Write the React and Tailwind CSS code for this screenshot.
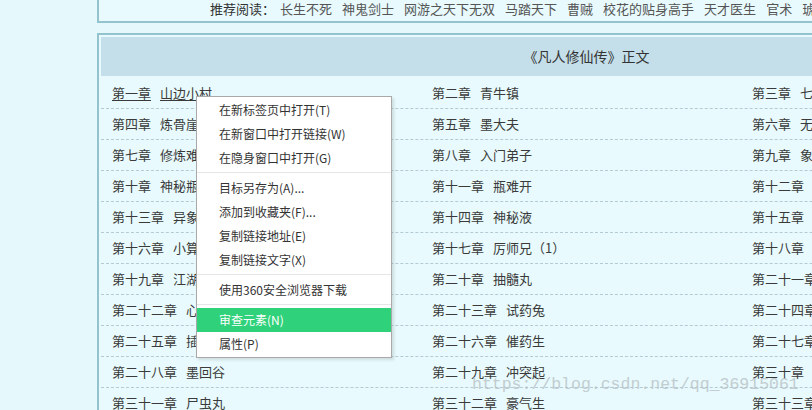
const recommend = [
  "长生不死",
  "神鬼剑士",
  "网游之天下无双",
  "马踏天下",
  "曹贼",
  "校花的贴身高手",
  "天才医生",
  "官术",
  "琥珀之剑",
];

const chapters = [
  "第一章 山边小村",
  "第二章 青牛镇",
  "第三章 七玄门",
  "第四章 炼骨崖",
  "第五章 墨大夫",
  "第六章 无名口诀",
  "第七章 修炼难",
  "第八章 入门弟子",
  "第九章 象甲功",
  "第十章 神秘瓶",
  "第十一章 瓶难开",
  "第十二章 绿液",
  "第十三章 异象",
  "第十四章 神秘液",
  "第十五章 张铁",
  "第十六章 小算盘",
  "第十七章 厉师兄（1）",
  "第十八章 厉师兄（2）",
  "第十九章 江湖人",
  "第二十章 抽髓丸",
  "第二十一章 七绝堂",
  "第二十二章 心思",
  "第二十三章 试药兔",
  "第二十四章 神手谷",
  "第二十五章 插手",
  "第二十六章 催药生",
  "第二十七章 长春功",
  "第二十八章 墨回谷",
  "第二十九章 冲突起",
  "第三十章 野狼帮",
  "第三十一章 尸虫丸",
  "第三十二章 豪气生",
  "第三十三章 墨大夫的嘱托",
];

const menuGroups = [
  ["在新标签页中打开(T)", "在新窗口中打开链接(W)", "在隐身窗口中打开(G)"],
  ["目标另存为(A)...", "添加到收藏夹(F)...", "复制链接地址(E)", "复制链接文字(X)"],
  ["使用360安全浏览器下载"],
  ["审查元素(N)", "属性(P)"],
];

const cjk = { fontFamily: '"Noto Sans CJK SC", "Noto Sans", sans-serif' };

function ContextMenu() {
  return (
    <div
      className="absolute left-[196px] top-[96px] w-[196px] border border-[#a9a9a9] bg-white py-[1px] shadow-[2px_2px_3px_rgba(0,0,0,0.12)]"
      style={cjk}
    >
      {menuGroups.map((group, gi) => (
        <div key={gi}>
          {gi > 0 && <div className="mt-[2px] mb-[3px] h-px bg-[#e6e6e6]" />}
          {group.map((item) => {
            const active = item === "审查元素(N)";
            return (
              <div
                key={item}
                className={
                  active
                    ? "flex h-[24px] items-center bg-[#2fd27a] pl-[22px] text-[12px] text-white"
                    : "flex h-[24px] items-center pl-[22px] text-[12px] text-[#333]"
                }
              >
                {item}
              </div>
            );
          })}
        </div>
      ))}
    </div>
  );
}

export default function App() {
  const rows = [];
  for (let i = 0; i < chapters.length; i += 3) rows.push(chapters.slice(i, i + 3));

  return (
    <div className="relative h-[410px] w-[812px] overflow-hidden bg-[#e5f8fc]" style={cjk}>
      <div className="pl-[97px]">
        {/* recommended reading strip */}
        <div className="flex h-[23px] w-[979px] items-start whitespace-nowrap border-x-2 border-b-2 border-[#93c4ce] bg-[#e8fafd] pl-[111px] text-[13px] leading-[18px]">
          <span className="mr-[5px] text-[#333]">推荐阅读：</span>
          <div className="flex gap-[10px] text-[#555]">
            {recommend.map((r) => (
              <span key={r}>{r}</span>
            ))}
          </div>
        </div>

        {/* chapter list */}
        <div className="mt-[10px] w-[979px] border-2 border-[#93c4ce] bg-[#e8fafd] p-[2px]">
          <div className="flex h-[39px] items-center justify-center bg-[#c4dfe9] text-[14px] text-[#333]">
            《凡人修仙传》正文
          </div>
          <div className="mt-[2px]">
            {rows.map((row, ri) => (
              <div
                key={ri}
                className="grid h-[31px] grid-cols-3 items-center border-b border-dashed border-[#b4cbd3] pl-[11px] text-[13px] text-[#3a3a3a]"
              >
                {row.map((c, ci) => {
                  const [num, name] = c.split(" ");
                  return (
                    <span
                      key={c}
                      className={
                        ri === 0 && ci === 0
                          ? "whitespace-nowrap underline underline-offset-2"
                          : "whitespace-nowrap"
                      }
                    >
                      <span className="pr-[9px]">{num}</span>
                      {name}
                    </span>
                  );
                })}
              </div>
            ))}
          </div>
        </div>
      </div>

      <ContextMenu />

      <div
        className="pointer-events-none absolute left-[472px] top-[373px] whitespace-nowrap text-[16.5px] text-[#b9c3c8] opacity-80"
        style={{ fontFamily: '"Liberation Mono", monospace' }}
      >
        https://blog.csdn.net/qq_36915061
      </div>
    </div>
  );
}
